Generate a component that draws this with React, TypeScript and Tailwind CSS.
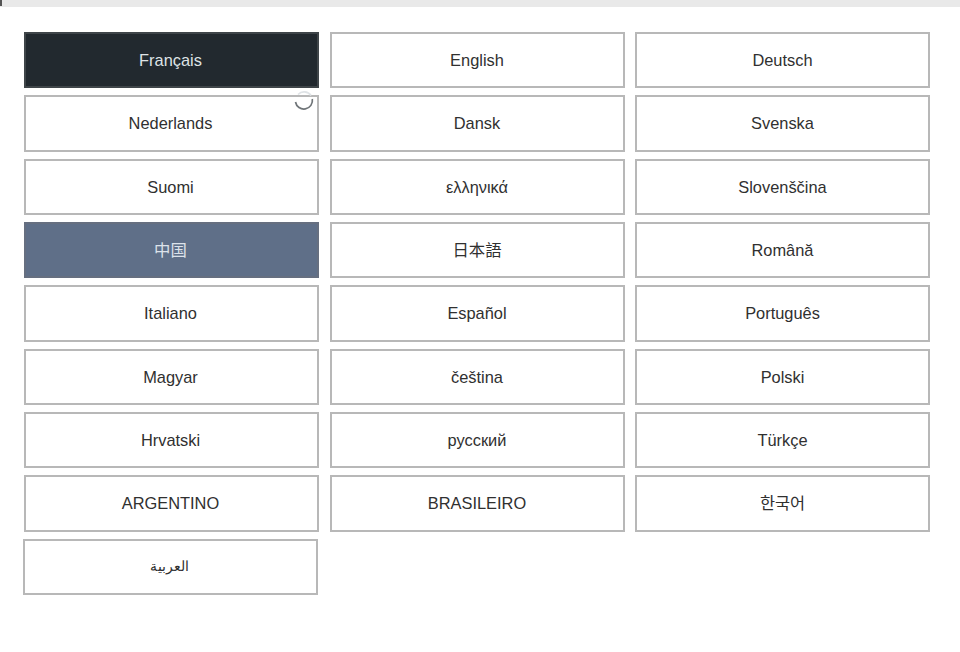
import React from 'react'

const languages = [
  'Français', 'English', 'Deutsch',
  'Nederlands', 'Dansk', 'Svenska',
  'Suomi', 'ελληνικά', 'Slovenščina',
  '中国', '日本語', 'Română',
  'Italiano', 'Español', 'Português',
  'Magyar', 'čeština', 'Polski',
  'Hrvatski', 'русский', 'Türkçe',
  'ARGENTINO', 'BRASILEIRO', '한국어',
  'العربية',
]

const LangButton = ({ name, firstCol }: { name: string; firstCol: boolean }) => {
  let cls = 'bg-white border-2 border-[#b8b8b8] text-[#303030]'
  if (name === 'Français') cls = 'bg-[#22292f] border-2 border-[#3f4549] text-[#dfe3e6]'
  if (name === '中国') cls = 'bg-[#5f6f88] border-2 border-[#666f80] text-[#dce2ea]'
  if (name === 'العربية') cls = 'bg-white border-2 border-[#b8b8b8] text-[#303030] -ml-px'
  return (
    <button className={`flex items-center justify-center h-full w-full ${firstCol ? 'pr-[2px]' : ''} ${name === 'العربية' ? 'text-[14px]' : 'text-[16.4px]'} ${cls}`}>
      {name}
    </button>
  )
}

const App = () => {
  return (
    <div className="relative h-[652px] w-[960px] overflow-hidden bg-white font-['Liberation_Sans','Noto_Sans_CJK_SC',sans-serif]">
      <div className="flex h-[7px] bg-[#e9e9e9]">
        <div className="h-[6px] w-[2px] bg-[#555555]"></div>
      </div>
      <div className="grid w-[906px] grid-cols-3 auto-rows-[56.35px] gap-x-[10.5px] gap-y-[7px] ml-[24px] mt-[25px]">
        {languages.map((name, i) => (
          <LangButton key={name} name={name} firstCol={i % 3 === 0} />
        ))}
      </div>
      {/* mouse cursor spinner */}
      <svg className="absolute left-[294px] top-[91px]" width="20" height="20" viewBox="0 0 20 20" fill="none">
        <path d="M1.5 11 A8.5 8.5 0 0 0 18.3 8" stroke="#6f7478" strokeWidth="1.7" />
        <path d="M4 3.5 A8.5 8.5 0 0 1 17 4.5" stroke="#dfe3e6" strokeWidth="1.7" />
      </svg>
    </div>
  )
}

export default App
